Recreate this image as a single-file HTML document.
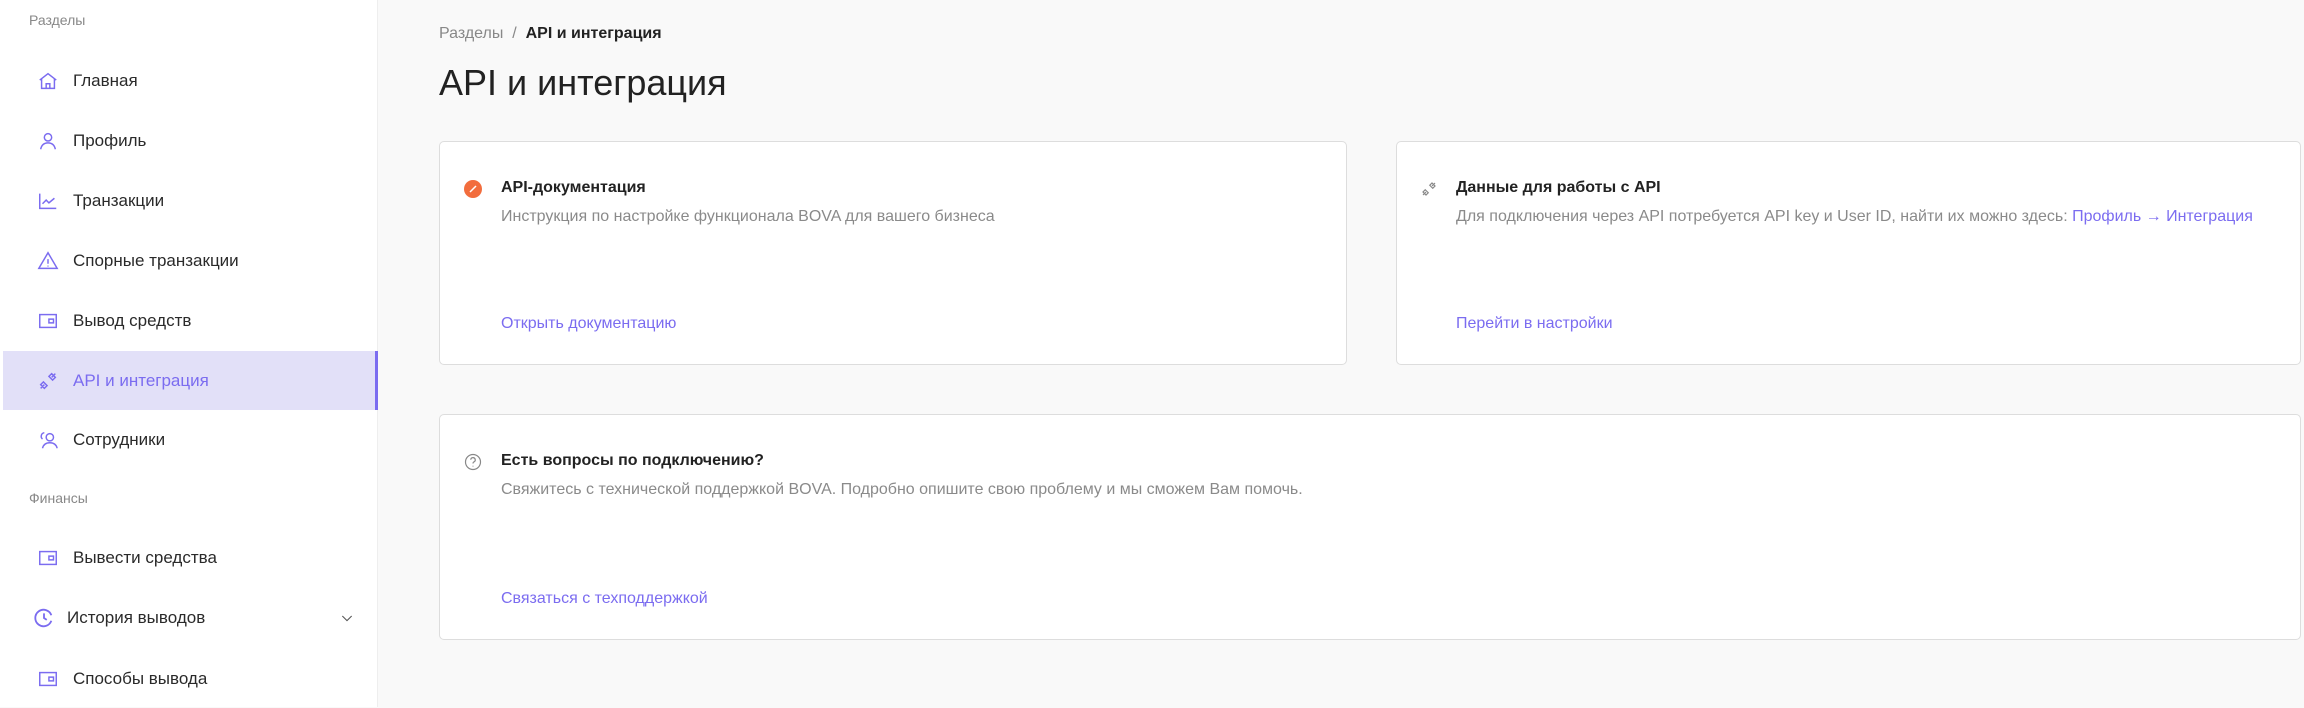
<!DOCTYPE html>
<html><head><meta charset="utf-8"><style>
*{box-sizing:border-box;margin:0;padding:0}
body{width:2304px;height:707px;overflow:hidden;background:#f9f9f9;font-family:"Liberation Sans","Noto Sans CJK SC",sans-serif;position:relative;color:#222}
.sb{position:absolute;left:0;top:0;width:378px;height:707px;background:#fff;border-right:1px solid #eee}
.lbl{position:absolute;left:29px;font-size:14px;color:#888}
.it{position:absolute;left:3px;width:375px;height:59px;display:flex;align-items:center;font-size:17px;color:#2a2a2a}
.it svg{position:absolute;left:34px;width:22px;height:22px}
.it span{position:absolute;left:70px}
.it.act{background:#e2e0f8;color:#7b6cf0;border-right:3px solid #7b6cf0}
.bc{position:absolute;left:439px;top:25px;font-size:16px;color:#888}
.bc b{color:#222;font-weight:bold}
h1{position:absolute;left:439px;top:62px;font-size:36px;font-weight:normal;color:#222}
.card{position:absolute;background:#fff;border:1px solid #ddd;border-radius:5px}
.t{position:absolute;font-size:16px;font-weight:bold;color:#222}
.d{position:absolute;font-size:16px;color:#8a8a8a;white-space:nowrap}
.a{color:#7b6cf0}
.l{position:absolute;font-size:16px;color:#7b6cf0}
</style></head><body>
<div class="sb">
<div class="lbl" style="top:12px">Разделы</div>
<div class="it" style="top:51px"><svg viewBox="0 0 24 24" fill="none" stroke="#7b6cf0" stroke-width="1.6"><path d="M3 11L12 4l9 7M5 9v11h14V9M10 20v-5h4v5"/></svg><span>Главная</span></div>
<div class="it" style="top:111px"><svg viewBox="0 0 24 24" fill="none" stroke="#7b6cf0" stroke-width="1.6"><circle cx="12" cy="8" r="4"/><path d="M4 21c1-5 4-7 8-7s7 2 8 7"/></svg><span>Профиль</span></div>
<div class="it" style="top:171px"><svg viewBox="0 0 24 24" fill="none" stroke="#7b6cf0" stroke-width="1.6"><path d="M3 4v16h18M6 15l4-4 3 3 6-5"/></svg><span>Транзакции</span></div>
<div class="it" style="top:231px"><svg viewBox="0 0 24 24" fill="none" stroke="#7b6cf0" stroke-width="1.6"><path d="M12 3L2 20h20z M12 10v5 M12 17v1"/></svg><span>Спорные транзакции</span></div>
<div class="it" style="top:291px"><svg viewBox="0 0 24 24" fill="none" stroke="#7b6cf0" stroke-width="1.6"><rect x="3" y="5" width="18" height="14"/><path d="M13 10h5v4h-5z"/></svg><span>Вывод средств</span></div>
<div class="it act" style="top:351px"><svg viewBox="0 0 24 24" fill="none" stroke="#7b6cf0" stroke-width="1.6"><path d="M4 20l4-4M20 4l-4 4M7 13l4 4-3 3-4-4zM13 7l4 4 3-3-4-4z"/></svg><span>API и интеграция</span></div>
<div class="it" style="top:410px"><svg viewBox="0 0 24 24" fill="none" stroke="#7b6cf0" stroke-width="1.6"><circle cx="14" cy="9" r="4"/><path d="M6 21c1-4 4-6 8-6s7 2 8 6M8 4a4 4 0 0 0-2 7"/></svg><span>Сотрудники</span></div>
<div class="lbl" style="top:490px">Финансы</div>
<div class="it" style="top:528px"><svg viewBox="0 0 24 24" fill="none" stroke="#7b6cf0" stroke-width="1.6"><rect x="3" y="5" width="18" height="14"/><path d="M13 10h5v4h-5z"/></svg><span>Вывести средства</span></div>
<div class="it" style="top:588px"><svg viewBox="0 0 24 24" fill="none" stroke="#7b6cf0" stroke-width="2" style="left:30px"><path d="M20 9A9 9 0 1 0 20 15M12 7v5l3 2"/></svg><span style="left:64px">История выводов</span><svg viewBox="0 0 24 24" fill="none" stroke="#555" stroke-width="1.6" style="left:336px;width:16px;height:16px"><path d="M5 9l7 7 7-7"/></svg></div>
<div class="it" style="top:649px"><svg viewBox="0 0 24 24" fill="none" stroke="#7b6cf0" stroke-width="1.6"><rect x="3" y="5" width="18" height="14"/><path d="M13 10h5v4h-5z"/></svg><span>Способы вывода</span></div>
</div>
<div class="bc">Разделы &nbsp;/&nbsp; <b>API и интеграция</b></div>
<h1>API и интеграция</h1>
<div class="card" style="left:439px;top:141px;width:908px;height:224px">
<svg style="position:absolute;left:24px;top:38px" width="18" height="18" viewBox="0 0 18 18"><circle cx="9" cy="9" r="9" fill="#f26d3d"/><path d="M6 12l6-6" stroke="#fff" stroke-width="1.5"/></svg>
<div class="t" style="left:61px;top:37px">API-документация</div>
<div class="d" style="left:61px;top:66px">Инструкция по настройке функционала BOVA для вашего бизнеса</div>
<div class="l" style="left:61px;top:173px">Открыть документацию</div>
</div>
<div class="card" style="left:1396px;top:141px;width:905px;height:224px">
<svg style="position:absolute;left:23px;top:38px" width="18" height="18" viewBox="0 0 24 24" fill="none" stroke="#888" stroke-width="1.6"><path d="M4 20l4-4M20 4l-4 4M7 13l4 4-3 3-4-4zM13 7l4 4 3-3-4-4z"/></svg>
<div class="t" style="left:59px;top:37px">Данные для работы с API</div>
<div class="d" style="left:59px;top:66px">Для подключения через API потребуется API key и User ID, найти их можно здесь: <span class="a">Профиль → Интеграция</span></div>
<div class="l" style="left:59px;top:173px">Перейти в настройки</div>
</div>
<div class="card" style="left:439px;top:414px;width:1862px;height:226px">
<svg style="position:absolute;left:24px;top:38px" width="18" height="18" viewBox="0 0 24 24" fill="none" stroke="#888" stroke-width="1.6"><circle cx="12" cy="12" r="10"/><path d="M9 9a3 3 0 1 1 4 3c-1 .5-1 1-1 2M12 17v1"/></svg>
<div class="t" style="left:61px;top:37px">Есть вопросы по подключению?</div>
<div class="d" style="left:61px;top:66px">Свяжитесь с технической поддержкой BOVA. Подробно опишите свою проблему и мы сможем Вам помочь.</div>
<div class="l" style="left:61px;top:175px">Связаться с техподдержкой</div>
</div>
</body></html>
